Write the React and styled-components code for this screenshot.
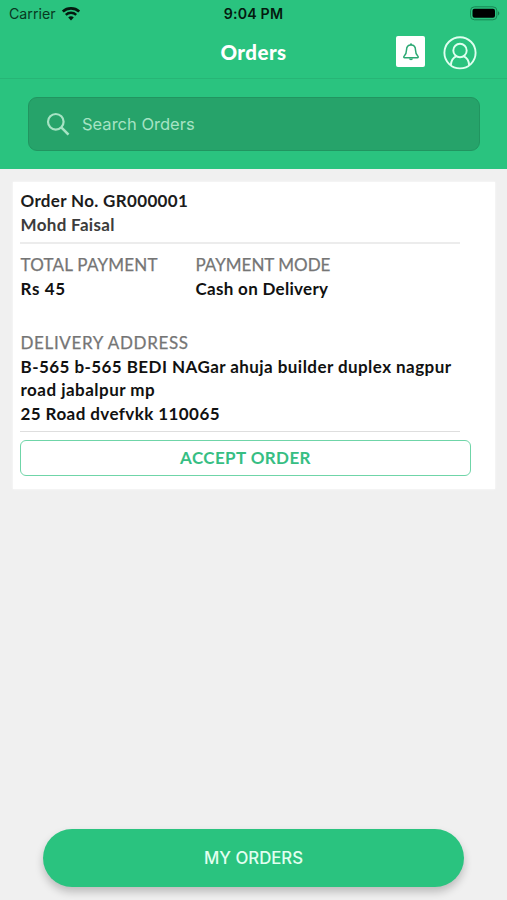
import React from "react";
import styled, { createGlobalStyle } from "styled-components";

const COLORS = {
  green: "#2ac37f",
  field: "#26a36a",
  page: "#f0f0f0",
  label: "#757575",
};

const GlobalStyle = createGlobalStyle`
  * {
    box-sizing: border-box;
  }
  body {
    margin: 0;
    background: ${COLORS.page};
  }
`;

const Screen = styled.div`
  width: 507px;
  height: 900px;
  display: flex;
  flex-direction: column;
  overflow: hidden;
  background: ${COLORS.page};
  font-family: Lato, "Open Sans", sans-serif;
`;

const StatusBar = styled.div`
  height: 27px;
  padding: 0 7px 0 9px;
  display: grid;
  grid-template-columns: 1fr auto 1fr;
  align-items: center;
  background: ${COLORS.green};
  color: #04190f;
  font-family: Inter, sans-serif;
  font-size: 14.2px;
  line-height: 27px;
  .carrier {
    display: flex;
    align-items: center;
    gap: 6px;
    color: #083821;
  }
  .time {
    margin-right: 2px;
    font-weight: 600;
    letter-spacing: 0.15px;
  }
  .battery {
    justify-self: end;
  }
`;

const NavBar = styled.div`
  height: 52px;
  padding: 0 30px;
  display: grid;
  grid-template-columns: 1fr auto 1fr;
  align-items: center;
  background: ${COLORS.green};
  border-bottom: 1px solid #27b576;
`;

const Title = styled.h1`
  grid-column: 2;
  margin: 0;
  color: #fff;
  font-size: 20.5px;
  font-weight: 900;
  line-height: 49px;
  letter-spacing: 0.45px;
`;

const Actions = styled.div`
  display: flex;
  justify-content: flex-end;
  align-items: center;
  gap: 18px;
`;

const Bell = styled.div`
  width: 29px;
  height: 31px;
  margin-top: -2px;
  display: flex;
  align-items: center;
  justify-content: center;
  border-radius: 2px;
  background: #fff;
`;

const SearchArea = styled.div`
  height: 90px;
  padding: 18px 27px 0 28px;
  background: ${COLORS.green};
`;

const SearchField = styled.div`
  height: 54px;
  padding-left: 17px;
  display: flex;
  align-items: center;
  gap: 12px;
  border: 1px solid #219560;
  border-radius: 9px;
  background: ${COLORS.field};
  color: #a6e3c4;
  font-family: Inter, sans-serif;
  font-size: 16.5px;
`;

const Card = styled.div`
  height: 307px;
  margin: 13px 12px 0 13px;
  padding: 7px 24px 0 7px;
  background: #fff;
  box-shadow: 0 0 2px rgba(255, 255, 255, 0.9);
`;

const Text = styled.p`
  margin: 0;
  padding-left: 0.5px;
  color: ${(props) => props.$color || "#111"};
  font-size: 17px;
  font-weight: 700;
  line-height: 23.5px;
  letter-spacing: ${(props) => props.$track || 0}px;
  white-space: nowrap;
`;

const Label = styled(Text)`
  color: ${COLORS.label};
  font-weight: 400;
  -webkit-text-stroke: 0.25px ${COLORS.label};
`;

const Divider = styled.div`
  width: 440px;
  height: ${(props) => props.$height}px;
  margin-top: ${(props) => props.$top || 0}px;
  background: ${(props) => props.$color || "#ececec"};
`;

const Payment = styled.div`
  height: 87px;
  padding-top: 9px;
  display: grid;
  grid-template-columns: 175px 1fr;
  align-content: start;
`;

const Address = styled.div`
  height: 100px;
`;

const AcceptButton = styled.button`
  width: 451px;
  height: 36px;
  margin-top: 8px;
  padding: 0 0 2px;
  display: block;
  border: 1px solid #6fd5a8;
  border-radius: 6px;
  background: #fff;
  color: #36be83;
  font-family: inherit;
  font-size: 17px;
  font-weight: 700;
  letter-spacing: 0.4px;
`;

const BottomButton = styled.button`
  width: 421px;
  height: 58px;
  margin: auto 0 13px 43px;
  padding: 0;
  border: 0;
  border-radius: 29px;
  background: ${COLORS.green};
  box-shadow: 0 5px 9px rgba(0, 0, 0, 0.22);
  color: #e2fff0;
  font-family: Inter, sans-serif;
  font-size: 16.8px;
  font-weight: 500;
`;

const WifiIcon = () => (
  <svg width="18" height="14" viewBox="0 0 18 14" fill="none" stroke="#04190f">
    <path d="M.8 4.6C5.2.4 12.8.4 17.2 4.6" strokeWidth="2.7" />
    <path d="M3.8 7.8C6.7 5.1 11.3 5.1 14.2 7.8" strokeWidth="2.4" />
    <path d="M6.2 10.4C7.8 9 10.2 9 11.8 10.4L9 13.4Z" fill="#04190f" stroke="none" />
  </svg>
);

const BatteryIcon = () => (
  <svg className="battery" width="30" height="15" viewBox="0 0 30 15">
    <rect x="0.5" y="0.8" width="26.4" height="13" rx="4" fill="none" stroke="#188653" />
    <rect x="2.5" y="2.8" width="22.5" height="9" rx="2" fill="#000" />
    <path d="M28 5.2C29.8 5.8 29.8 8.8 28 9.4Z" fill="#17804f" />
  </svg>
);

const BellIcon = () => (
  <svg width="18" height="20" viewBox="0 0 18 20" fill="none" stroke="#2ba873" strokeWidth="1.5">
    <path
      d="M9 3C6.2 3 4.5 5.1 4.5 8C4.5 11.3 3.9 12.6 2.1 14.2C1.4 14.9 1.8 15.7 2.6 15.7H15.4C16.2 15.7 16.6 14.9 15.9 14.2C14.1 12.6 13.5 11.3 13.5 8C13.5 5.1 11.8 3 9 3Z"
      strokeLinejoin="round"
    />
    <path d="M9 1.4V3" strokeWidth="2" />
    <path d="M7 16.4C7.2 18.7 10.8 18.7 11 16.4Z" fill="#2ba873" stroke="none" />
  </svg>
);

const UserIcon = () => (
  <svg width="34" height="34" viewBox="0 0 34 34" fill="none" stroke="#dffff0" strokeWidth="1.9">
    <circle cx="17" cy="16.8" r="15.6" />
    <circle cx="17" cy="14.5" r="6.7" />
    <path d="M7.8 29.3C8.2 24.3 10.8 21.3 13.6 20.2M20.4 20.2C23.2 21.3 25.8 24.3 26.2 29.3" />
  </svg>
);

const SearchIcon = () => (
  <svg width="24" height="24" viewBox="0 0 24 24" fill="none" stroke="#a6e3c4" strokeWidth="2.2">
    <circle cx="9.8" cy="9.8" r="7.8" />
    <path d="M15.3 15.4L22.5 22.6" strokeWidth="2.6" />
  </svg>
);

const App = () => (
  <>
    <GlobalStyle />
    <Screen>
      <StatusBar>
        <div className="carrier">
          Carrier
          <WifiIcon />
        </div>
        <div className="time">9:04 PM</div>
        <BatteryIcon />
      </StatusBar>
      <NavBar>
        <Title>Orders</Title>
        <Actions>
          <Bell>
            <BellIcon />
          </Bell>
          <UserIcon />
        </Actions>
      </NavBar>
      <SearchArea>
        <SearchField>
          <SearchIcon />
          <span>Search Orders</span>
        </SearchField>
      </SearchArea>
      <Card>
        <Text $color="#1c1c1c" $track={0.33}>Order No. GR000001</Text>
        <Text $color="#3c3c3c" $track={0.33}>Mohd Faisal</Text>
        <Divider $height={2} $top={6} />
        <Payment>
          <Label $track={0.22}>TOTAL PAYMENT</Label>
          <Label>PAYMENT MODE</Label>
          <Text $track={0.6}>Rs 45</Text>
          <Text $track={0.3}>Cash on Delivery</Text>
        </Payment>
        <Address>
          <Label $track={0.65}>DELIVERY ADDRESS</Label>
          <Text $track={0.44}>B-565 b-565 BEDI NAGar ahuja builder duplex nagpur</Text>
          <Text $track={0.48}>road jabalpur mp</Text>
          <Text $track={0.42}>25 Road dvefvkk 110065</Text>
        </Address>
        <Divider $height={1} $color="#dedede" />
        <AcceptButton>ACCEPT ORDER</AcceptButton>
      </Card>
      <BottomButton>MY ORDERS</BottomButton>
    </Screen>
  </>
);

export default App;
